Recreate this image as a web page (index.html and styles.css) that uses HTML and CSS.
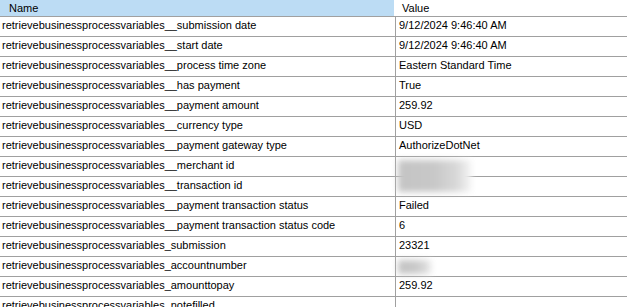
FILE: index.html
```html
<!DOCTYPE html>
<html>
<head>
<meta charset="utf-8">
<link rel="stylesheet" href="styles.css">
</head>
<body>
<div class="list">
  <div class="header">
    <div class="hcell hname">Name</div>
    <div class="hcell hvalue">Value</div>
  </div>
  <div class="row"><div class="name">retrievebusinessprocessvariables__submission date</div><div class="value">9/12/2024 9:46:40 AM</div></div>
  <div class="row"><div class="name">retrievebusinessprocessvariables__start date</div><div class="value">9/12/2024 9:46:40 AM</div></div>
  <div class="row"><div class="name">retrievebusinessprocessvariables__process time zone</div><div class="value">Eastern Standard Time</div></div>
  <div class="row"><div class="name">retrievebusinessprocessvariables__has payment</div><div class="value">True</div></div>
  <div class="row"><div class="name">retrievebusinessprocessvariables__payment amount</div><div class="value">259.92</div></div>
  <div class="row"><div class="name">retrievebusinessprocessvariables__currency type</div><div class="value">USD</div></div>
  <div class="row"><div class="name">retrievebusinessprocessvariables__payment gateway type</div><div class="value">AuthorizeDotNet</div></div>
  <div class="row"><div class="name">retrievebusinessprocessvariables__merchant id</div><div class="value"></div></div>
  <div class="row"><div class="name">retrievebusinessprocessvariables__transaction id</div><div class="value"></div></div>
  <div class="row"><div class="name">retrievebusinessprocessvariables__payment transaction status</div><div class="value">Failed</div></div>
  <div class="row"><div class="name">retrievebusinessprocessvariables__payment transaction status code</div><div class="value">6</div></div>
  <div class="row"><div class="name">retrievebusinessprocessvariables_submission</div><div class="value">23321</div></div>
  <div class="row"><div class="name">retrievebusinessprocessvariables_accountnumber</div><div class="value"></div></div>
  <div class="row"><div class="name">retrievebusinessprocessvariables_amounttopay</div><div class="value">259.92</div></div>
  <div class="row"><div class="name">retrievebusinessprocessvariables_notefilled</div><div class="value"></div></div>
  <div class="redact redact-ids"></div>
  <div class="redact redact-acct"></div>
</div>
</body>
</html>
```

FILE: styles.css
```css
html, body {
  margin: 0;
  padding: 0;
  background: #ffffff;
  overflow: hidden;
}
.list {
  position: relative;
  width: 627px;
  height: 307px;
  overflow: hidden;
  font-family: "Liberation Sans", Arial, sans-serif;
  font-size: 11px;
  color: #000000;
}
.header {
  display: flex;
  height: 16px;
}
.hcell {
  line-height: 14px;
  padding-top: 1px;
  box-sizing: border-box;
}
.hname {
  width: 394px;
  background: #bcdcf4;
  padding-left: 9px;
}
.hvalue {
  flex: 1;
  padding-left: 8px;
}
.row {
  display: flex;
  height: 20px;
  border-top: 1px solid #a0a0a0;
  box-sizing: border-box;
}
.name {
  width: 393px;
  border-right: 1px solid #a0a0a0;
  padding-left: 2px;
  line-height: 14px;
  padding-top: 1px;
  white-space: nowrap;
  overflow: hidden;
  box-sizing: content-box;
  flex: none;
}
.value {
  flex: 1;
  padding-left: 3px;
  line-height: 14px;
  padding-top: 1px;
  white-space: nowrap;
}
.redact {
  position: absolute;
  background: linear-gradient(90deg, #c4c4c4 0%, #c8c8c8 50%, #d8d8d8 80%, #f4f4f4 100%);
  filter: blur(3px);
}
.redact-ids {
  left: 398px;
  top: 160px;
  width: 73px;
  height: 32px;
}
.redact-acct {
  left: 398px;
  top: 260px;
  width: 34px;
  height: 14px;
}
```
